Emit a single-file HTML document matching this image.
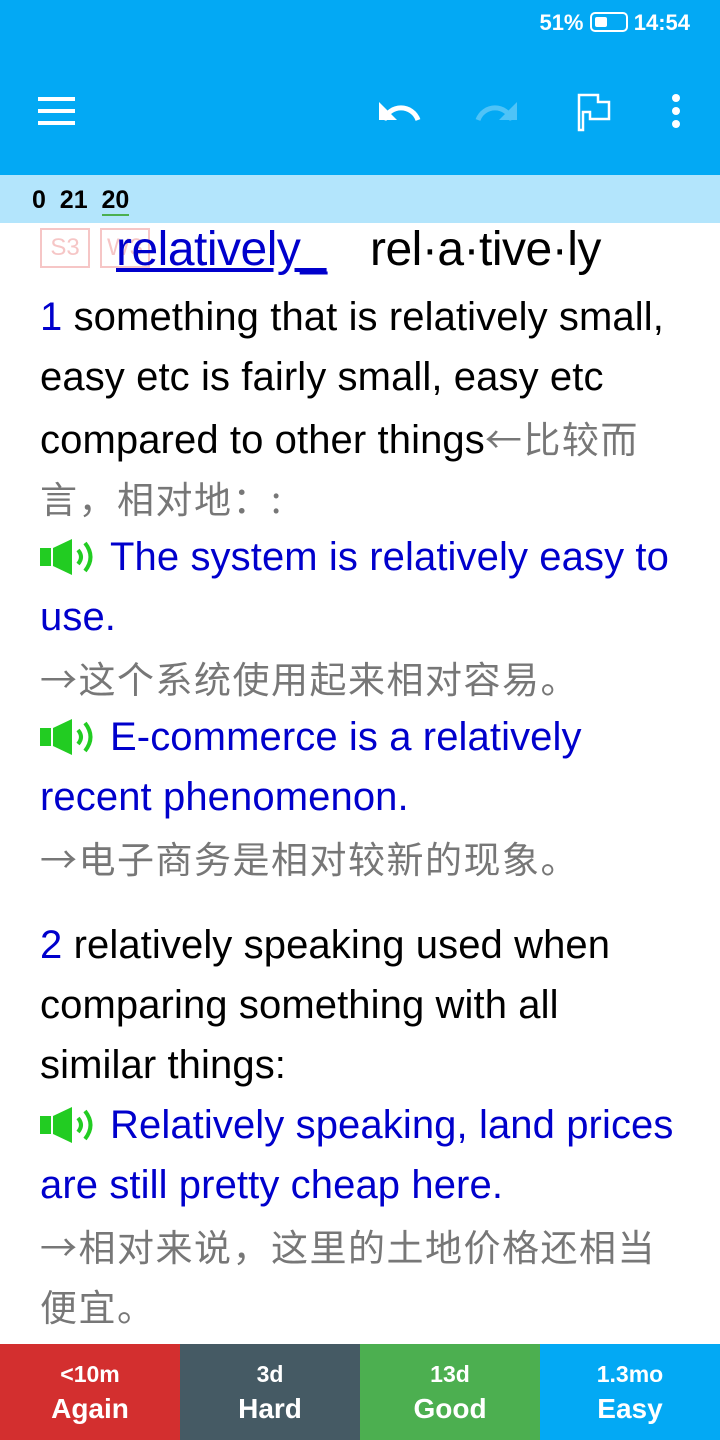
<!DOCTYPE html>
<html><head><meta charset="utf-8"><style>
body{margin:0;width:720px;height:1440px;position:relative;background:#fff;font-family:"Liberation Sans","Noto Sans CJK SC",sans-serif;overflow:hidden}
.top{position:absolute;left:0;top:0;width:720px;height:175px;background:#03A9F4}
.sub{position:absolute;left:0;top:175px;width:720px;height:48px;background:#B3E5FC}
.l{position:absolute;left:40px;font-size:40px;white-space:nowrap;line-height:40px;letter-spacing:0.1px}
.b{color:#0000CC}.k{color:#000}
.g{color:#777;font-family:"Noto Sans CJK SC",sans-serif;font-size:37px;letter-spacing:1.5px}
.spk{display:inline-block;width:60px;height:40px;vertical-align:-7px;margin-right:10px}
.btn{position:absolute;top:1344px;width:180px;height:96px;color:#fff;text-align:center;font-weight:bold}
.btn .a{font-size:23px;margin-top:17px}.btn .c{font-size:28px;margin-top:5px}
</style></head><body>
<div class="top"></div>
<div style="position:absolute;right:30px;top:10px;color:#fff;font-size:22px;font-weight:bold">51% <span style="display:inline-block;width:34px;height:16px;border:2px solid #fff;border-radius:5px;vertical-align:-2px;position:relative"><span style="position:absolute;left:3px;top:3px;width:12px;height:10px;background:#fff;border-radius:2px"></span></span> 14:54</div>
<svg style="position:absolute;left:0;top:80px" width="720" height="60">
<g fill="#fff"><rect x="38" y="17" width="37" height="4"/><rect x="38" y="29" width="37" height="4"/><rect x="38" y="41" width="37" height="4"/></g>
<path d="M384 40 A18 18 0 0 1 418 40" stroke="#fff" stroke-width="5" fill="none"/><path d="M379 22 L379 40 L397 40Z" fill="#fff"/>
<path d="M478 40 A18 18 0 0 1 512 40" stroke="#4FC3F7" stroke-width="5" fill="none"/><path d="M517 22 L517 40 L499 40Z" fill="#4FC3F7"/>
<path d="M579 50 V15 H598 V22 H609 V39 H590 V32 H583 V50Z" stroke="#fff" stroke-width="2.5" fill="none"/>
<circle cx="676" cy="18" r="4" fill="#fff"/><circle cx="676" cy="31" r="4" fill="#fff"/><circle cx="676" cy="44" r="4" fill="#fff"/>
</svg>
<div class="sub"></div>
<div style="position:absolute;left:32px;top:186px;font-size:25px;font-weight:bold;color:#000">0&nbsp; 21&nbsp; <span style="border-bottom:2px solid #4CAF50">20</span></div>
<div style="position:absolute;left:40px;top:228px;width:46px;height:36px;border:2px solid #f6c6c6;color:#f6c6c6;font-size:24px;text-align:center;line-height:36px">S3</div>
<div style="position:absolute;left:100px;top:228px;width:46px;height:36px;border:2px solid #f6c6c6;color:#f6c6c6;font-size:24px;text-align:center;line-height:36px">W3</div>
<div style="position:absolute;left:116px;top:222px;font-size:48px;color:#0000CC;text-decoration:underline;letter-spacing:-0.5px">relatively_</div>
<div style="position:absolute;left:370px;top:222px;font-size:48px;color:#000;letter-spacing:-0.5px">rel·a·tive·ly</div>
<div class="l" style="top:297px"><span class="b">1</span> something that is relatively small,</div>
<div class="l" style="top:357px">easy etc is fairly small, easy etc</div>
<div class="l" style="top:417px">compared to other things<span class="g">←比较而</span></div>
<div class="l g" style="top:477px">言，相对地：:</div>
<div class="l b" style="top:537px"><svg class="spk" viewBox="0 0 60 40"><rect x="0" y="11" width="11" height="18" fill="#22cc22"/><path d="M13 11 L32 2 V38 L13 29Z" fill="#22cc22"/><path d="M38 13 Q44 20 38 27 M45 6 Q56 20 45 34" stroke="#22cc22" stroke-width="4" fill="none"/></svg>The system is relatively easy to</div>
<div class="l b" style="top:597px">use.</div>
<div class="l g" style="top:657px">→这个系统使用起来相对容易。</div>
<div class="l b" style="top:717px"><svg class="spk" viewBox="0 0 60 40"><rect x="0" y="11" width="11" height="18" fill="#22cc22"/><path d="M13 11 L32 2 V38 L13 29Z" fill="#22cc22"/><path d="M38 13 Q44 20 38 27 M45 6 Q56 20 45 34" stroke="#22cc22" stroke-width="4" fill="none"/></svg>E-commerce is a relatively</div>
<div class="l b" style="top:777px">recent phenomenon.</div>
<div class="l g" style="top:837px">→电子商务是相对较新的现象。</div>
<div class="l" style="top:925px"><span class="b">2</span> relatively speaking used when</div>
<div class="l" style="top:985px">comparing something with all</div>
<div class="l" style="top:1045px">similar things:</div>
<div class="l b" style="top:1105px"><svg class="spk" viewBox="0 0 60 40"><rect x="0" y="11" width="11" height="18" fill="#22cc22"/><path d="M13 11 L32 2 V38 L13 29Z" fill="#22cc22"/><path d="M38 13 Q44 20 38 27 M45 6 Q56 20 45 34" stroke="#22cc22" stroke-width="4" fill="none"/></svg>Relatively speaking, land prices</div>
<div class="l b" style="top:1165px">are still pretty cheap here.</div>
<div class="l g" style="top:1225px">→相对来说，这里的土地价格还相当</div>
<div class="l g" style="top:1285px">便宜。</div>
<div class="btn" style="left:0;background:#D32F2F"><div class="a">&lt;10m</div><div class="c">Again</div></div>
<div class="btn" style="left:180px;background:#455A64"><div class="a">3d</div><div class="c">Hard</div></div>
<div class="btn" style="left:360px;background:#4CAF50"><div class="a">13d</div><div class="c">Good</div></div>
<div class="btn" style="left:540px;background:#03A9F4"><div class="a">1.3mo</div><div class="c">Easy</div></div>
</body></html>
